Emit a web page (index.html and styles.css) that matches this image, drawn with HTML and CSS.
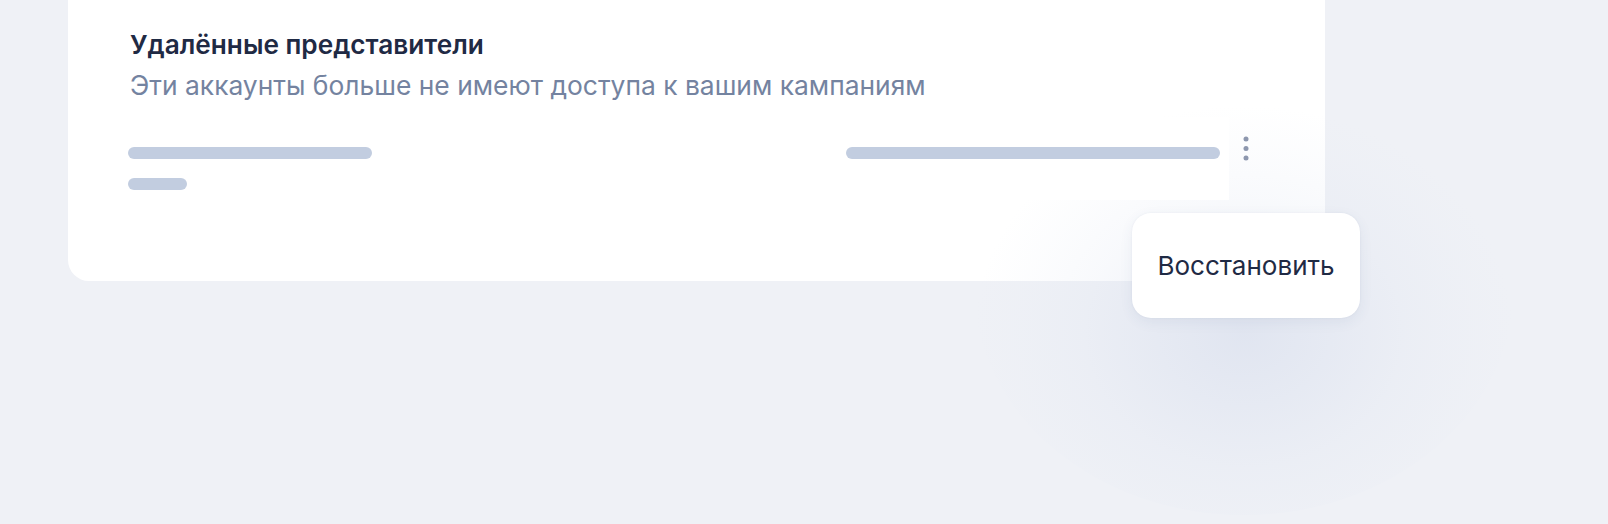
FILE: index.html
```html
<!DOCTYPE html>
<html lang="ru">
<head>
<meta charset="utf-8">
<title>Удалённые представители</title>
<link rel="stylesheet" href="styles.css">
</head>
<body>
<div class="stage">
  <section class="card">
    <h2 class="card-title">Удалённые представители</h2>
    <p class="card-subtitle">Эти аккаунты больше не имеют доступа к вашим кампаниям</p>
    <div class="list">
      <div class="row">
        <div class="col-left">
          <span class="bar bar-name"></span>
          <span class="bar bar-short"></span>
        </div>
        <div class="col-right">
          <span class="bar bar-email"></span>
        </div>
      </div>
      <button class="more" aria-label="Ещё">
        <svg width="6" height="25" viewBox="0 0 6 25"><circle cx="3" cy="3" r="2.5"/><circle cx="3" cy="12.5" r="2.5"/><circle cx="3" cy="22" r="2.5"/></svg>
      </button>
    </div>
  </section>
  <div class="spotlight"></div>
  <div class="menu">
    <button class="menu-item">Восстановить</button>
  </div>
</div>
</body>
</html>
```
FILE: styles.css
```css
html, body {
  margin: 0;
  padding: 0;
}
body {
  background: #eff1f6;
  font-family: Inter, "Noto Sans", "Liberation Sans", sans-serif;
  width: 1608px;
  height: 524px;
  overflow: hidden;
}
.stage {
  position: relative;
  width: 1608px;
  height: 524px;
  overflow: hidden;
}
.card {
  position: relative;
  margin-left: 68px;
  width: 1257px;
  box-sizing: border-box;
  background: #ffffff;
  border-radius: 0 0 21px 21px;
  padding: 29px 62px 81px 60px;
}
.card-title {
  margin: 0 0 0 2px;
  font-size: 26.2px;
  line-height: 32px;
  font-weight: 600;
  color: #1f2a44;
}
.card-subtitle {
  margin: 8px 0 0 2px;
  font-size: 26.4px;
  line-height: 32px;
  font-weight: 400;
  color: #7483a0;
}
.list {
  display: flex;
  align-items: flex-start;
  margin-top: 16px;
}
.row {
  position: relative;
  z-index: 3;
  flex: 1;
  display: flex;
  justify-content: space-between;
  background: #ffffff;
  padding: 30px 9px 10px 0;
}
.col-left, .col-right {
  display: flex;
  flex-direction: column;
  gap: 19px;
}
.bar {
  display: block;
  height: 12px;
  border-radius: 6px;
  background: #c2cde0;
}
.bar-name { width: 244px; }
.bar-short { width: 59px; }
.bar-email { width: 374px; }
.more {
  position: relative;
  z-index: 3;
  width: 34px;
  margin: 19px 0 0 0;
  padding: 0;
  border: 0;
  background: transparent;
  display: flex;
  justify-content: center;
  fill: #8d97ae;
}
.more svg {
  display: block;
}
.spotlight {
  position: absolute;
  z-index: 2;
  left: 974px;
  top: 60px;
  width: 540px;
  height: 455px;
  border-radius: 50%;
  pointer-events: none;
  background: radial-gradient(ellipse 50% 50% at 50% 60%, rgba(206, 214, 233, 0.44) 0%, rgba(210, 218, 236, 0.32) 30%, rgba(218, 225, 240, 0.18) 60%, rgba(225, 231, 243, 0.08) 85%, rgba(225, 231, 243, 0) 100%);
}
.menu {
  position: absolute;
  z-index: 4;
  left: 1132px;
  top: 213px;
  width: 228px;
  height: 105px;
  background: #ffffff;
  border-radius: 19px;
  box-shadow: 0 4px 14px rgba(60, 80, 130, 0.07), 0 0 2px rgba(60, 80, 130, 0.08);
  display: flex;
  align-items: center;
  justify-content: center;
}
.menu-item {
  border: 0;
  background: transparent;
  padding: 0;
  font-family: Inter, "Noto Sans", "Liberation Sans", sans-serif;
  font-size: 26px;
  line-height: 32px;
  color: #1f2a44;
}
```
